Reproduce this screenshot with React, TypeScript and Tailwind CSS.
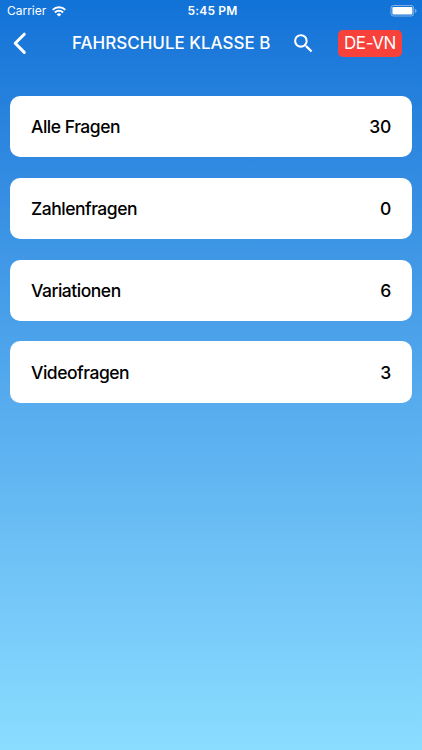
interface Category {
    label: string;
    count: number;
}

const categories: Category[] = [
    { label: 'Alle Fragen', count: 30 },
    { label: 'Zahlenfragen', count: 0 },
    { label: 'Variationen', count: 6 },
    { label: 'Videofragen', count: 3 },
];

function WifiIcon() {
    return (
        <svg className="w-[14px] h-[11px]" viewBox="0 0 14 11" fill="none" stroke="white" strokeWidth="2">
            <path d="M0.7 3.9a9 9 0 0 1 12.6 0" />
            <path d="M2.9 6.5a5.8 5.8 0 0 1 8.2 0" />
            <path d="M7 10.6 4.7 8.4a3.2 3.2 0 0 1 4.6 0z" fill="white" stroke="none" />
        </svg>
    );
}

function BatteryIcon() {
    return (
        <svg className="w-[27px] h-[12px]" viewBox="0 0 27 12" fill="none">
            <rect x="1" y="0.5" width="22.7" height="10.5" rx="2.5" stroke="white" strokeOpacity="0.45" />
            <rect x="2.4" y="2" width="20" height="7.5" rx="1" fill="white" />
            <path d="M25.1 4v3.8c.9-.3 1.4-1.1 1.4-1.9S26 4.3 25.1 4z" fill="white" fillOpacity="0.5" />
        </svg>
    );
}

function StatusBar() {
    return (
        <div className="flex items-center justify-between h-[22px] pl-[7px] pr-[5px] text-[12px] leading-[22px]">
            <div className="flex items-center gap-[5.5px] w-[100px]">
                <span className="tracking-[-0.02px]">Carrier</span>
                <WifiIcon />
            </div>
            <span className="pl-[1px] text-center font-semibold tracking-[0.2px]">5:45 PM</span>
            <div className="flex justify-end w-[100px]">
                <BatteryIcon />
            </div>
        </div>
    );
}

function Header() {
    return (
        <div className="flex items-center h-[42px] pl-[12px] pr-[20px]">
            <button className="w-[16px] h-[24px]" aria-label="Zurück">
                <svg className="w-[16px] h-[24px]" viewBox="0 0 16 24" fill="none" stroke="white" strokeWidth="3" strokeLinecap="round" strokeLinejoin="round">
                    <path d="M12.3 3.2 3.2 12.3l9.1 9.1" />
                </svg>
            </button>
            <h1 className="ml-[44px] w-[199px] pt-[2px] whitespace-nowrap text-[17px] font-medium">FAHRSCHULE KLASSE B</h1>
            <button className="ml-[20px] w-[25px] h-[25px]" aria-label="Suchen">
                <svg className="w-[25px] h-[25px]" viewBox="0 0 24 24" fill="white">
                    <path d="M15.5 14h-.79l-.28-.27A6.471 6.471 0 0 0 16 9.5 6.5 6.5 0 1 0 9.5 16c1.61 0 3.09-.59 4.23-1.57l.27.28v.79l5 4.99L20.49 19l-4.99-5zm-6 0C7.01 14 5 11.99 5 9.5S7.01 5 9.5 5 14 7.01 14 9.5 11.99 14 9.5 14z" />
                </svg>
            </button>
            <button className="ml-auto w-[64px] h-[27px] rounded-[5px] bg-[#f8413a] text-[17px] leading-[27px] tracking-[-0.4px] whitespace-nowrap">DE-VN</button>
        </div>
    );
}

export default function App() {
    return (
        <div className="flex flex-col h-[750px] w-full overflow-hidden bg-linear-to-b from-[#1172d7] to-[#8bddff] text-white font-['Inter','Liberation_Sans',sans-serif]">
            <StatusBar />
            <Header />
            <div className="flex flex-col gap-[20.5px] px-[10.4px] pt-[32px]">
                {categories.map((item) => (
                    <div key={item.label} className="flex items-center justify-between h-[61.3px] pt-[1.2px] px-[20.6px] rounded-[10px] bg-white text-black text-[17.5px] font-medium">
                        <span className="tracking-[-0.48px]">{item.label}</span>
                        <span className="tracking-[-0.3px]">{item.count}</span>
                    </div>
                ))}
            </div>
        </div>
    );
}
